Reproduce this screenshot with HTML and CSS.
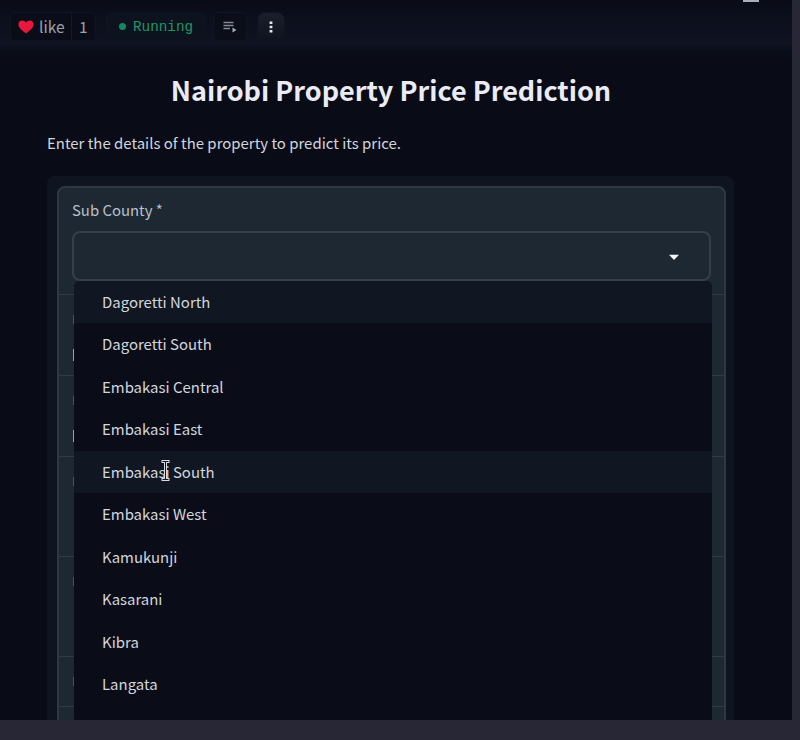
FILE: index.html
```html
<!DOCTYPE html>
<html lang="en">
<head>
<meta charset="utf-8">
<title>Nairobi Property Price Prediction</title>
<link rel="stylesheet" href="styles.css">
</head>
<body>
<div class="viewport">
  <header class="topbar">
    <div class="like">
      <svg class="heart" viewBox="0 0 16 14"><path d="M8 13.6C5 11.2.4 8 .4 4.3.4 2 2 .5 4.100 .5 5.700.5 7.200 1.300 8 2.700 8.800 1.300 10.300.5 11.900.5 14 .5 15.600 2 15.600 4.300 15.600 8 11 11.200 8 13.600Z" fill="#e8173e"/></svg>
      <span class="like-label">like</span>
      <span class="like-count">1</span>
    </div>
    <div class="status"><span class="dot"></span><span>Running</span></div>
    <div class="logs"><svg width="14" height="14" viewBox="0 0 14 14"><path d="M.5 2.500H10.500M.5 5.500H10.500M.5 8.500H7" stroke="#858994" stroke-width="1.300" fill="none"/><path d="M9.500 7.500V12.500L13.500 10Z" fill="#a6aab3"/></svg></div>
    <div class="more"><svg width="4" height="12" viewBox="0 0 4 12"><path d="M.6 .5H3.400V3H.6ZM.6 4.700H3.400V7.200H.6ZM.6 8.900H3.400V11.400H.6Z" fill="#e6e7ec"/></svg></div>
    <span class="window-mark"></span>
  </header>
  <main class="app">
    <h1>Nairobi Property Price Prediction</h1>
    <p class="intro">Enter the details of the property to predict its price.</p>
    <div class="halo">
      <div class="form">
        <section class="field first">
          <label>Sub County *</label>
          <div class="select">
            <svg class="caret" width="12" height="7" viewBox="0 0 12 7"><path d="M1 .7H11L6 6Z" fill="#f4f6fa"/></svg>
            <ul class="options">
              <li class="active">Dagoretti North</li>
              <li>Dagoretti South</li>
              <li>Embakasi Central</li>
              <li>Embakasi East</li>
              <li class="active">Embakasi South<svg class="cursor" width="9" height="21" viewBox="0 0 9 21"><path d="M.5 1.500H8.500M4.500 1.500V19.500M.5 19.500H8.500" stroke="#d8dae0" stroke-width="3" fill="none"/><path d="M1.500 1.500H7.500M4.500 1.500V19.500M1.500 19.500H7.500" stroke="#11151f" stroke-width="1" fill="none"/></svg></li>
              <li>Embakasi West</li>
              <li>Kamukunji</li>
              <li>Kasarani</li>
              <li>Kibra</li>
              <li>Langata</li>
            </ul>
          </div>
        </section>
        <section class="field short"><i class="peek-label"></i><i class="peek-control"></i></section>
        <section class="field short"><i class="peek-label"></i><i class="peek-control"></i></section>
        <section class="field tall"><i class="peek-label"></i></section>
        <section class="field tall"><i class="peek-label"></i></section>
        <section class="field slim"><i class="peek-label"></i></section>
        <section class="field"></section>
      </div>
    </div>
  </main>
</div>
</body>
</html>
```
FILE: styles.css
```css
* { box-sizing: border-box; }
body {
  margin: 0;
  width: 800px;
  height: 740px;
  overflow: hidden;
  background: #282735;
  color: #d3d5dd;
  font-family: "Noto Sans CJK SC", "Noto Sans", sans-serif;
}
.viewport {
  width: 792px;
  height: 720px;
  overflow: hidden;
  background: #090c17;
}
.topbar {
  position: relative;
  display: flex;
  height: 52px;
  padding: 12px 0 0 10px;
  background: linear-gradient(#090c17, #0f1322 85%, #090c17);
}
.like, .status, .logs, .more {
  display: flex;
  align-items: center;
  height: 29px;
  border: 1px solid #111521;
  border-radius: 5px;
}
.like { width: 86px; background: #0a0d17; color: #9da1aa; font-size: 15.500px; line-height: 26px; }
.heart { width: 16px; height: 14px; margin-left: 7px; }
.like-label { width: 32px; height: 27px; margin-left: 5px; }
.like-count { flex: 1; height: 27px; padding-left: 7px; border-left: 1px solid #151926; }
.status {
  width: 100px;
  margin-left: 10px;
  padding-left: 12px;
  border-color: #0d1420;
  background: #0c131e;
  color: #239467;
  font: 14.300px "Liberation Mono", monospace;
}
.dot { width: 7px; height: 7px; margin-right: 7px; border-radius: 50%; background: #168765; }
.logs { width: 34px; margin-left: 7px; justify-content: center; background: #0b0e18; }
.more { width: 28px; margin-left: 10px; justify-content: center; border-radius: 8px; background: linear-gradient(#1b1f2b, #0e1320); }
.window-mark { position: absolute; left: 743px; top: 0; width: 16px; height: 2px; background: #a9acbb; }
.app { padding: 0 52px 0 47px; }
h1 {
  margin: 16px 0 0;
  padding-right: 5px;
  font-size: 27px;
  font-weight: 700;
  line-height: 44px;
  text-align: center;
  color: #eaebf4;
  white-space: nowrap;
}
.intro { margin: 19px 0 0; font-size: 14.950px; line-height: 24px; white-space: nowrap; }
.halo { width: 687px; height: 560px; margin-top: 21px; padding: 10px 9px 0 10px; border-radius: 8px; background: #0f1421; }
.form { width: 669px; height: 700px; border: 2px solid #2d3843; border-radius: 8px 8px 0 0; background: #1e2833; }
.field { position: relative; padding: 0 13px; border-top: 1px solid #303b46; }
.first { height: 106px; padding-top: 11px; border: 0; }
.short { height: 81px; }
.tall { height: 100px; }
.slim { height: 50px; }
label { display: block; height: 32px; font-size: 14.900px; line-height: 22px; color: #b9c0ca; }
.select {
  position: relative;
  display: flex;
  align-items: center;
  justify-content: flex-end;
  height: 50px;
  padding: 3px 29px 0 0;
  border: 2px solid #343f4a;
  border-radius: 8px;
}
.options {
  position: absolute;
  z-index: 2;
  left: 0;
  top: 48px;
  width: 638px;
  height: 460px;
  margin: 0;
  padding: 0;
  list-style: none;
  border-radius: 6px 6px 0 0;
  overflow: hidden;
  background: #0a0d17;
}
.options li { position: relative; height: 42.450px; padding-left: 28px; font-size: 14.950px; line-height: 41px; white-space: nowrap; }
.options .active { background: #101722; }
.cursor { position: absolute; left: 87px; top: 9px; }
.peek-label, .peek-control { display: block; width: 1px; height: 9px; margin: 20px 0 0 1px; background: #46525d; }
.peek-control { height: 12px; margin-top: 25px; background: #98a0aa; }
```
